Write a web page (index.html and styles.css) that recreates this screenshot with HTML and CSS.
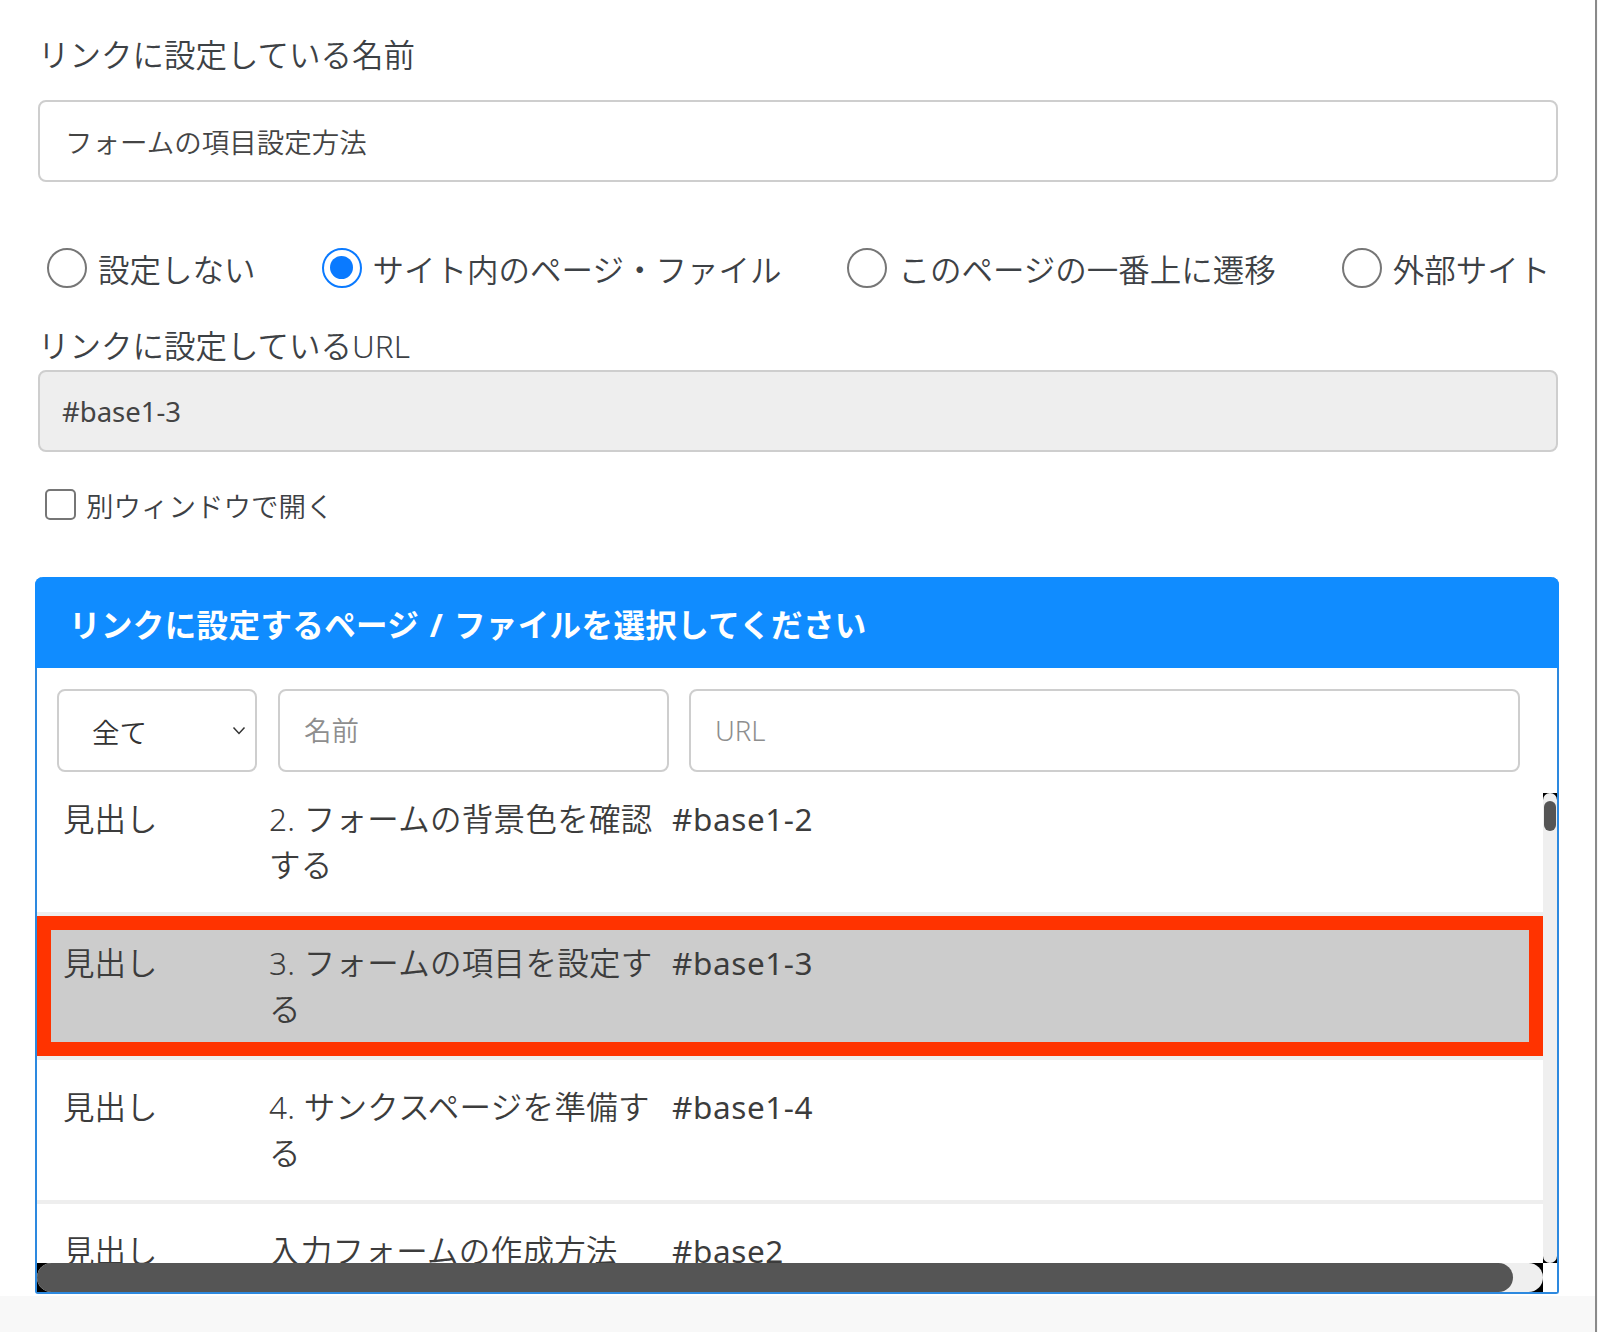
FILE: index.html
```html
<!DOCTYPE html>
<html lang="ja">
<head>
    <meta charset="UTF-8">
    <meta name="viewport" content="width=device-width, initial-scale=1.0">
    <title>リンク設定</title>
    <link rel="stylesheet" href="styles.css">
</head>
<body>
<div class="page">
    <div class="content">
        <!-- リンク名 -->
        <p class="field-label">リンクに設定している名前</p>
        <input class="text-box" type="text" value="フォームの項目設定方法">

        <!-- リンク種別 -->
        <div class="radio-row">
            <label class="radio-item"><span class="radio"></span>設定しない</label>
            <label class="radio-item"><span class="radio checked"></span>サイト内のページ・ファイル</label>
            <label class="radio-item"><span class="radio"></span>このページの一番上に遷移</label>
            <label class="radio-item"><span class="radio"></span>外部サイト</label>
        </div>

        <!-- URL -->
        <p class="field-label url-label">リンクに設定しているURL</p>
        <input class="text-box locked" type="text" value="#base1-3" readonly>

        <label class="check-item"><span class="checkbox"></span>別ウィンドウで開く</label>

        <!-- ページ選択 -->
        <section class="picker">
            <h2 class="picker-title">リンクに設定するページ / ファイルを選択してください</h2>
            <div class="picker-body">
                <div class="filters">
                    <div class="select-box">
                        <span>全て</span>
                        <svg width="14" height="9" viewBox="0 0 14 9"><path d="M1.5 1.5l5.5 6 5.5-6" fill="none" stroke="#333" stroke-width="1.5"/></svg>
                    </div>
                    <input class="filter-input name-filter" type="text" placeholder="名前">
                    <input class="filter-input url-filter" type="text" placeholder="URL">
                </div>

                <div class="list-frame">
                    <div class="list-view">
                        <div class="list-inner">
                            <div class="row">
                                <span>見出し</span>
                                <span>2. フォームの背景色を確認する</span>
                                <span>#base1-2</span>
                            </div>
                            <div class="row selected">
                                <span>見出し</span>
                                <span>3. フォームの項目を設定する</span>
                                <span>#base1-3</span>
                            </div>
                            <div class="row">
                                <span>見出し</span>
                                <span>4. サンクスページを準備する</span>
                                <span>#base1-4</span>
                            </div>
                            <div class="row">
                                <span>見出し</span>
                                <span>入力フォームの作成方法</span>
                                <span>#base2</span>
                            </div>
                        </div>
                    </div>
                    <div class="vbar"><div class="vtrack"><div class="vthumb"></div></div></div>
                    <div class="hbar"><div class="htrack"><div class="hthumb"></div></div></div>
                    <div class="corner"></div>
                </div>
            </div>
        </section>
    </div>
</div>
</body>
</html>
```

FILE: styles.css
```css
* { margin: 0; padding: 0; box-sizing: border-box; }
input { outline: none; font-family: inherit; font-weight: inherit; }

body {
    font-family: "Noto Sans", "Noto Sans CJK JP", sans-serif;
    font-weight: 350;
    color: #3d4145;
    background: #f8f8f8;
}

.page {
    width: 1597px;
    min-height: 1332px;
    border-right: 2px solid #8a8a8a;
    background: #f8f8f8;
}
.content {
    background: #fff;
    padding: 31px 37px 2px 38px;
}

/* ラベル */
.field-label {
    font-size: 31.5px;
    line-height: 47px;
}
.url-label {
    margin-top: 31px;
}

/* テキスト入力 */
.text-box {
    display: block;
    width: 100%;
    height: 82px;
    margin-top: 22px;
    padding: 0 25px;
    border: 2px solid #cecece;
    border-radius: 8px;
    font-size: 27.5px;
    color: #444;
    background: #fff;
}
.text-box.locked {
    margin-top: 1px;
    padding: 0 22px;
    background: #eee;
    font-weight: 400;
}

/* ラジオ */
.radio-row {
    display: flex;
    align-items: center;
    gap: 66px;
    height: 47px;
    margin-top: 62px;
    padding-left: 9px;
    font-size: 31.5px;
}
.radio-item {
    display: flex;
    align-items: center;
    gap: 11px;
    white-space: nowrap;
}
.radio {
    display: flex;
    align-items: center;
    justify-content: center;
    width: 40px;
    height: 40px;
    border: 2px solid #767676;
    border-radius: 50%;
    background: #fff;
}
.radio.checked {
    border: 2.5px solid #0a7aff;
}
.radio.checked::after {
    content: "";
    width: 23px;
    height: 23px;
    border-radius: 50%;
    background: #0a7aff;
}

/* チェックボックス */
.check-item {
    display: flex;
    align-items: center;
    gap: 10px;
    height: 47px;
    margin-top: 29px;
    padding-left: 7px;
    font-size: 27.5px;
}
.checkbox {
    width: 31px;
    height: 31px;
    border: 2px solid #767676;
    border-radius: 5px;
    background: #fff;
}

/* ページ選択パネル */
.picker {
    margin: 49px -1px 0 -3px;
    border: 2px solid #2d89df;
    border-top: 0;
    border-radius: 8px 8px 3px 3px;
}
.picker-title {
    display: flex;
    align-items: center;
    height: 91px;
    margin: 0 -2px;
    padding-left: 34px;
    border-radius: 8px 8px 0 0;
    background: #108cff;
    color: #fff;
    font-size: 31.5px;
    font-weight: bold;
    letter-spacing: 0.4px;
    word-spacing: 2px;
}
.picker-body {
    padding-top: 21px;
}

.filters {
    display: flex;
    gap: 21px;
    height: 83px;
    margin: 0 20px;
}
.select-box,
.filter-input {
    height: 83px;
    border: 2px solid #cecece;
    border-radius: 8px;
    font-size: 27.5px;
    background: #fff;
}
.select-box {
    display: flex;
    align-items: center;
    justify-content: space-between;
    width: 200px;
    padding: 0 9px 0 33px;
    color: #333;
}
.filter-input {
    padding: 0 24px;
    color: #444;
}
.filter-input::placeholder {
    color: #8e8e8e;
}
.name-filter { width: 391px; }
.url-filter  { width: 831px; margin-left: -1px; }

/* 一覧 */
.list-frame {
    display: grid;
    grid-template-columns: 1fr 14px;
    grid-template-rows: 470px 29px;
    margin-top: 21px;
}
.list-view {
    overflow: hidden;
    background: #fff;
}
.list-inner {
    margin-top: -21px;
}
.row {
    display: grid;
    grid-template-columns: 199px 396px 1fr;
    column-gap: 7px;
    padding: 24px 0 24px 26px;
    border-bottom: 4px solid #eee;
    font-size: 31.5px;
    line-height: 46px;
    color: #3c3c3c;
}
.row > span:nth-child(2) {
    letter-spacing: 0.3px;
}
.row > span:nth-child(3) {
    letter-spacing: 0.6px;
    font-weight: 400;
}
.row.selected {
    background: #ccc;
    box-shadow: inset 0 0 0 14px #ff3300;
}

/* スクロールバー */
.vbar,
.hbar {
    background: #000;
}
.vtrack {
    height: 100%;
    padding-top: 8px;
    border-radius: 7px;
    background: #efefef;
}
.vthumb {
    width: 12px;
    height: 30px;
    margin-left: 1px;
    border-radius: 6px;
    background: #555;
}
.htrack {
    height: 100%;
    border-radius: 15px;
    background: #efefef;
}
.hthumb {
    width: 1476px;
    height: 100%;
    border-radius: 15px;
    background: #555;
}
.corner {
    background: #fff;
}
```
